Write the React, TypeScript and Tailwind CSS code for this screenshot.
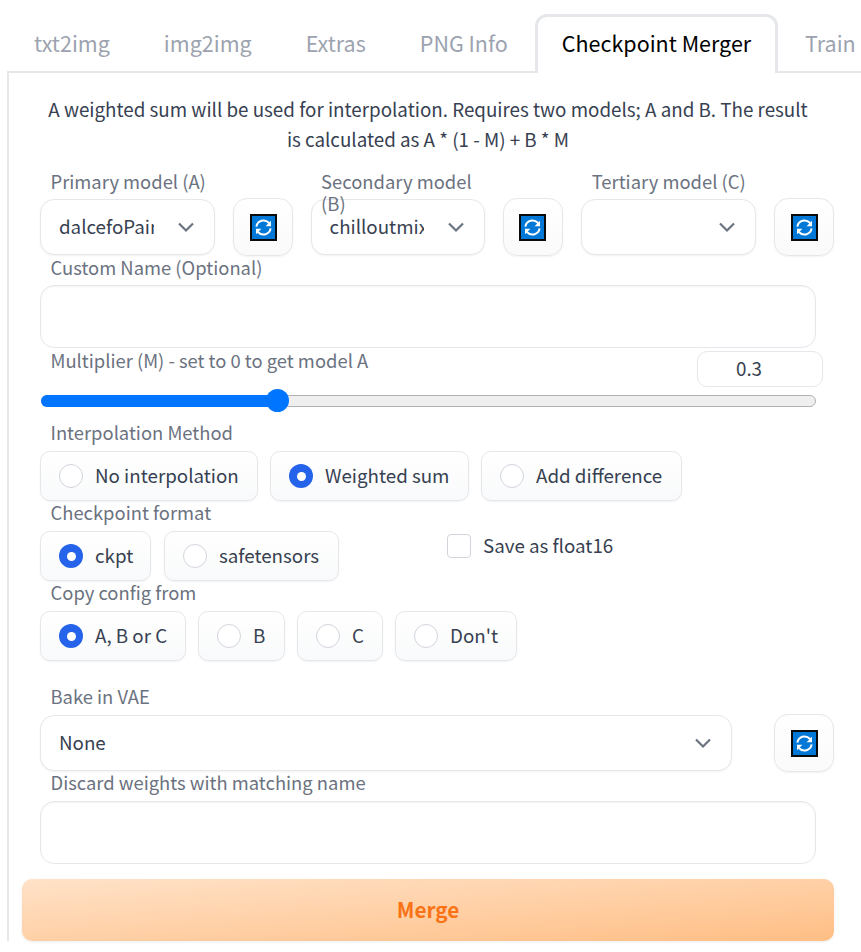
const fontStack = { fontFamily: '"Noto Sans CJK SC", "Open Sans", sans-serif' };

const tabs = ["txt2img", "img2img", "Extras", "PNG Info"];

function RefreshIcon() {
  return (
    <svg width="27" height="27" viewBox="0 0 27 27">
      <rect x="1" y="1" width="25" height="25" fill="#0078d7" stroke="#0b0b0b" strokeWidth="2" />
      <path d="M6.4 12.6a7.2 7.2 0 0 1 12.4-3.8l1 1.1" fill="none" stroke="#fff" strokeWidth="2" />
      <path d="M21 6.8v5.4h-5.4z" fill="#fff" />
      <path d="M20.6 14.4a7.2 7.2 0 0 1-12.4 3.8l-1-1.1" fill="none" stroke="#fff" strokeWidth="2" />
      <path d="M6 20.2v-5.4h5.4z" fill="#fff" />
    </svg>
  );
}

function RefreshButton() {
  return (
    <button className="flex h-[58px] w-[60px] shrink-0 items-center justify-center rounded-[14px] border border-[#e5e7eb] bg-gradient-to-b from-white to-[#fafafa] shadow-[0_1px_2px_rgba(0,0,0,0.05)]">
      <RefreshIcon />
    </button>
  );
}

function Chevron() {
  return (
    <svg width="18" height="12" viewBox="0 0 18 12" className="shrink-0">
      <path d="M2 2.5l7 7 7-7" fill="none" stroke="#6b7280" strokeWidth="2.2" />
    </svg>
  );
}

function Label({ children, className = "" }: { children: React.ReactNode; className?: string }) {
  return <div className={`pl-[10.5px] text-[18.4px] leading-[22px] text-[#6b7280] ${className}`}>{children}</div>;
}

function Select({ value, width, textWidth }: { value: string; width: string; textWidth: string }) {
  return (
    <div className={`flex h-[56px] ${width} shrink-0 items-center justify-between rounded-[14px] border border-[#e5e7eb] bg-white pl-[18px] pr-[19px] shadow-[0_1px_2px_rgba(0,0,0,0.05)]`}>
      <span className={`${textWidth} overflow-hidden whitespace-nowrap pb-[2px] text-[18.75px] text-[#374151]`}>{value}</span>
      <Chevron />
    </div>
  );
}

function ModelColumn({ label, value, selectWidth = "w-[175px]", textWidth = "w-[95px]" }: { label: string; value: string; selectWidth?: string; textWidth?: string }) {
  return (
    <div className="flex w-[253px] shrink-0 flex-col">
      <Label className="relative z-10 h-[22px] w-[175px]">{label}</Label>
      <div className="mt-[6px] flex items-center gap-[18px]">
        <Select value={value} width={selectWidth} textWidth={textWidth} />
        <RefreshButton />
      </div>
    </div>
  );
}

function Radio({ label, checked = false, width }: { label: string; checked?: boolean; width: string }) {
  return (
    <div className={`flex h-[50px] ${width} items-center gap-[12px] rounded-[10px] border border-[#e5e7eb] bg-gradient-to-b from-white to-[#f9fafb] pl-[18px] shadow-[0_1px_2px_rgba(0,0,0,0.05)]`}>
      {checked ? (
        <span className="flex h-[24px] w-[24px] items-center justify-center rounded-full bg-[#2563eb]">
          <span className="h-[9px] w-[9px] rounded-full bg-white" />
        </span>
      ) : (
        <span className="h-[24px] w-[24px] rounded-full border border-[#d1d5db] bg-white" />
      )}
      <span className="pb-[2px] text-[18.75px] text-[#374151]">{label}</span>
    </div>
  );
}

function TextBox({ height }: { height: string }) {
  return <div className={`${height} w-[776px] rounded-[14px] border border-[#e5e7eb] bg-white shadow-[inset_0_1px_2px_rgba(0,0,0,0.05)]`} />;
}

export default function App() {
  return (
    <div className="h-[952px] w-[861px] overflow-hidden bg-white" style={fontStack}>
      <div className="flex h-[73px] w-[900px] items-end pl-[7px]">
        <div className="flex h-[59px] w-[528px] items-center border-b-2 border-[#e5e7eb] pt-[2px]">
          <div className="flex text-[21.5px] text-[#9ca3af]">
            {tabs.map((t) => (
              <span key={t} className="px-[27px]">{t}</span>
            ))}
          </div>
        </div>
        <div className="flex h-[59px] w-[243px] items-center justify-center rounded-t-[12px] border-x-[3px] border-t-[3px] border-[#e5e7eb] bg-white pb-[4px] text-[21.5px] text-black">
          Checkpoint Merger
        </div>
        <div className="flex h-[59px] flex-1 items-center border-b-2 border-[#e5e7eb] pl-[27px] pt-[2px] text-[21.5px] text-[#9ca3af]">
          Train
        </div>
      </div>

      <div className="ml-[7px] border-l-2 border-[#e5e7eb] pl-[31px]">
        <div className="w-[776px] pt-[21px] text-center text-[18.8px] leading-[30px] text-[#374151]">
          <p>A weighted sum will be used for interpolation. Requires two models; A and B. The result</p>
          <p>is calculated as A * (1 - M) + B * M</p>
        </div>

        <div className="mt-[16px] flex gap-[17.6px]">
          <ModelColumn label="Primary model (A)" value="dalcefoPainting" />
          <ModelColumn label="Secondary model (B)" value="chilloutmix" selectWidth="w-[174px]" textWidth="w-[94px]" />
          <ModelColumn label="Tertiary model (C)" value="" />
        </div>

        <Label>Custom Name (Optional)</Label>
        <TextBox height="mt-[7px] h-[63px]" />

        <div className="flex h-[39px] w-[783px] items-start justify-between">
          <Label className="pt-[1px]">Multiplier (M) - set to 0 to get model A</Label>
          <div className="mt-[3px] flex h-[36px] w-[126px] items-center rounded-[10px] border border-[#e5e7eb] bg-white pb-[2px] pl-[38px] text-[18.75px] text-[#374151]">
            0.3
          </div>
        </div>

        <div className="relative ml-[1px] mt-[8px] h-[12px] w-[775px] rounded-full border border-[#b2b2b2] bg-[#efefef]">
          <div className="absolute -left-px -top-px h-[12px] w-[237px] rounded-full bg-[#0075ff]" />
          <div className="absolute left-[224px] top-[-7px] h-[23px] w-[23px] rounded-full bg-[#0075ff]" />
        </div>

        <Label className="mt-[14px]">Interpolation Method</Label>
        <div className="mt-[8px] flex gap-[12px]">
          <Radio label="No interpolation" width="w-[218px]" />
          <Radio label="Weighted sum" checked width="w-[199px]" />
          <Radio label="Add difference" width="w-[201px]" />
        </div>

        <Label>Checkpoint format</Label>
        <div className="mt-[8px] flex items-start gap-[13px]">
          <Radio label="ckpt" checked width="w-[111px]" />
          <Radio label="safetensors" width="w-[175px]" />
          <div className="ml-[95px] mt-[3px] flex items-start gap-[12px]">
            <span className="h-[24px] w-[24px] rounded-[4px] border border-[#d1d5db] bg-white" />
            <span className="text-[18.75px] leading-[22px] text-[#374151]">Save as float16</span>
          </div>
        </div>

        <Label>Copy config from</Label>
        <div className="mt-[8px] flex gap-[12px]">
          <Radio label="A, B or C" checked width="w-[146px]" />
          <Radio label="B" width="w-[87px]" />
          <Radio label="C" width="w-[86px]" />
          <Radio label="Don't" width="w-[122px]" />
        </div>

        <Label className="mt-[24px]">Bake in VAE</Label>
        <div className="mt-[7px] flex items-center gap-[42px]">
          <Select value="None" width="w-[692px]" textWidth="w-[400px]" />
          <RefreshButton />
        </div>

        <Label className="-mt-[1px]">Discard weights with matching name</Label>
        <TextBox height="mt-[8px] h-[63px]" />

        <button className="-ml-[18px] mt-[15px] flex h-[62px] w-[812px] items-center justify-center rounded-[10px] bg-gradient-to-br from-[#ffe2c8] to-[#ffbe84] text-[20.7px] font-semibold text-[#f97316] shadow-[0_1px_3px_rgba(0,0,0,0.08)]">
          Merge
        </button>
      </div>
    </div>
  );
}
